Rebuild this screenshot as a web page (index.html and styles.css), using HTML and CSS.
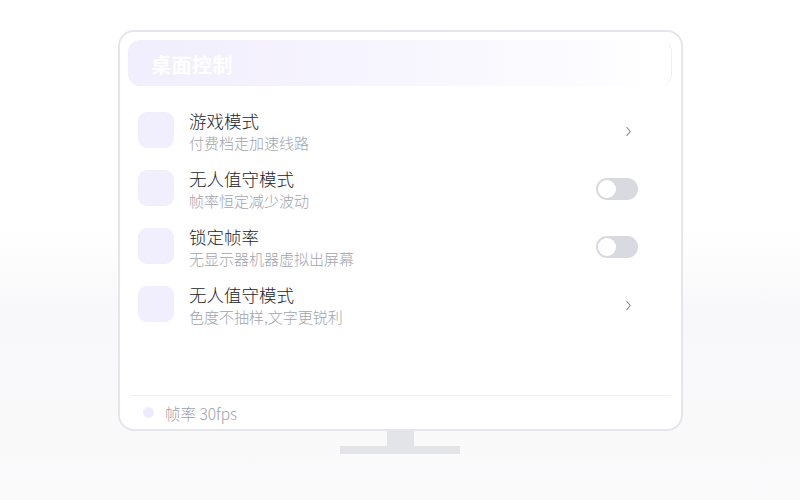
FILE: index.html
```html
<!DOCTYPE html>
<html lang="zh-CN">
<head>
  <meta charset="UTF-8">
  <meta name="viewport" content="width=device-width, initial-scale=1.0">
  <title>桌面控制</title>
  <link rel="stylesheet" href="styles.css">
</head>
<body>
  <div class="monitor">
    <div class="screen">
      <div class="panel-head">
        <span>桌面控制</span>
      </div>

      <ul class="options">
        <li class="option">
          <div class="option-icon"></div>
          <div class="option-text">
            <div class="option-title">游戏模式</div>
            <div class="option-desc">付费档走加速线路</div>
          </div>
          <svg class="chevron" width="7" height="11" viewBox="0 0 7 11"><path d="M1.8 1.5 L5.3 5.5 L1.8 9.5" fill="none" stroke="#7c818b" stroke-width="1.1" stroke-linecap="round" stroke-linejoin="round"/></svg>
        </li>
        <li class="option">
          <div class="option-icon"></div>
          <div class="option-text">
            <div class="option-title">无人值守模式</div>
            <div class="option-desc">帧率恒定减少波动</div>
          </div>
          <div class="toggle"><span class="knob"></span></div>
        </li>
        <li class="option">
          <div class="option-icon"></div>
          <div class="option-text">
            <div class="option-title">锁定帧率</div>
            <div class="option-desc">无显示器机器虚拟出屏幕</div>
          </div>
          <div class="toggle"><span class="knob"></span></div>
        </li>
        <li class="option">
          <div class="option-icon"></div>
          <div class="option-text">
            <div class="option-title">无人值守模式</div>
            <div class="option-desc">色度不抽样,文字更锐利</div>
          </div>
          <svg class="chevron" width="7" height="11" viewBox="0 0 7 11"><path d="M1.8 1.5 L5.3 5.5 L1.8 9.5" fill="none" stroke="#7c818b" stroke-width="1.1" stroke-linecap="round" stroke-linejoin="round"/></svg>
        </li>
      </ul>

      <div class="status">
        <span class="status-dot"></span>
        <span>帧率 30fps</span>
      </div>
    </div>
    <div class="neck"></div>
    <div class="base"></div>
  </div>
</body>
</html>
```

FILE: styles.css
```css
* {
  box-sizing: border-box;
  margin: 0;
  padding: 0;
  font-family: "Noto Sans CJK SC", "Noto Sans", sans-serif;
}
body {
  width: 800px;
  height: 500px;
  overflow: hidden;
  background: linear-gradient(to bottom, #ffffff 0, #ffffff 46%, #f8f8fa 62%, #fafafb 100%);
  padding-top: 30px;
}
.monitor {
  display: flex;
  flex-direction: column;
  align-items: center;
}
.screen {
  width: 565px;
  height: 401px;
  margin-left: 1px;
  background: #ffffff;
  border: 2px solid #e4e6eb;
  border-radius: 16px;
  padding: 8px 8px 0;
  display: flex;
  flex-direction: column;
}
.panel-head {
  height: 46px;
  margin-right: 1px;
  border-radius: 12px;
  background: linear-gradient(90deg, #f1eefd 0%, #f6f4fe 40%, #fcfcff 85%, #ffffff 96%);
  padding-left: 23px;
  display: flex;
  align-items: center;
  border-right: 1px solid #f0f0f4;
}
.panel-head span {
  color: #ffffff;
  font-size: 20px;
  font-weight: 700;
  letter-spacing: 0.5px;
  padding-top: 3px;
}
.options {
  list-style: none;
  flex: 1;
  padding: 26px 35px 0 10px;
  display: flex;
  flex-direction: column;
  gap: 22px;
}
.option {
  display: flex;
  align-items: center;
  height: 36px;
}
.option-icon {
  width: 36px;
  height: 36px;
  border-radius: 9px;
  background: #f1eefd;
  flex-shrink: 0;
}
.option-text {
  flex: 1;
  margin-left: 15px;
  padding-top: 2px;
}
.option-title {
  font-size: 17.5px;
  font-weight: 300;
  line-height: 23px;
  color: #222429;
}
.option-desc {
  font-size: 15px;
  font-weight: 300;
  line-height: 21px;
  color: #a0a4ad;
}
.chevron {
  margin-right: 6px;
  margin-top: 2px;
}
.toggle {
  width: 42px;
  height: 22px;
  border-radius: 11px;
  background: #d8dae0;
  padding: 2px;
  margin-top: 1px;
}
.knob {
  display: block;
  width: 18px;
  height: 18px;
  border-radius: 50%;
  background: #ffffff;
}
.status {
  margin: 0 2px;
  height: 34px;
  border-top: 1px solid #eef0f3;
  display: flex;
  align-items: center;
  gap: 11px;
  padding-left: 13px;
  font-size: 15.5px;
  font-weight: 300;
  color: #9ca0a8;
}
.status-dot {
  width: 11px;
  height: 11px;
  border-radius: 50%;
  background: #efebfd;
}
.neck {
  width: 27px;
  height: 15px;
  background: #e2e4e8;
  margin-left: 1px;
}
.base {
  width: 120px;
  height: 8px;
  background: #e2e4e8;
}
```
